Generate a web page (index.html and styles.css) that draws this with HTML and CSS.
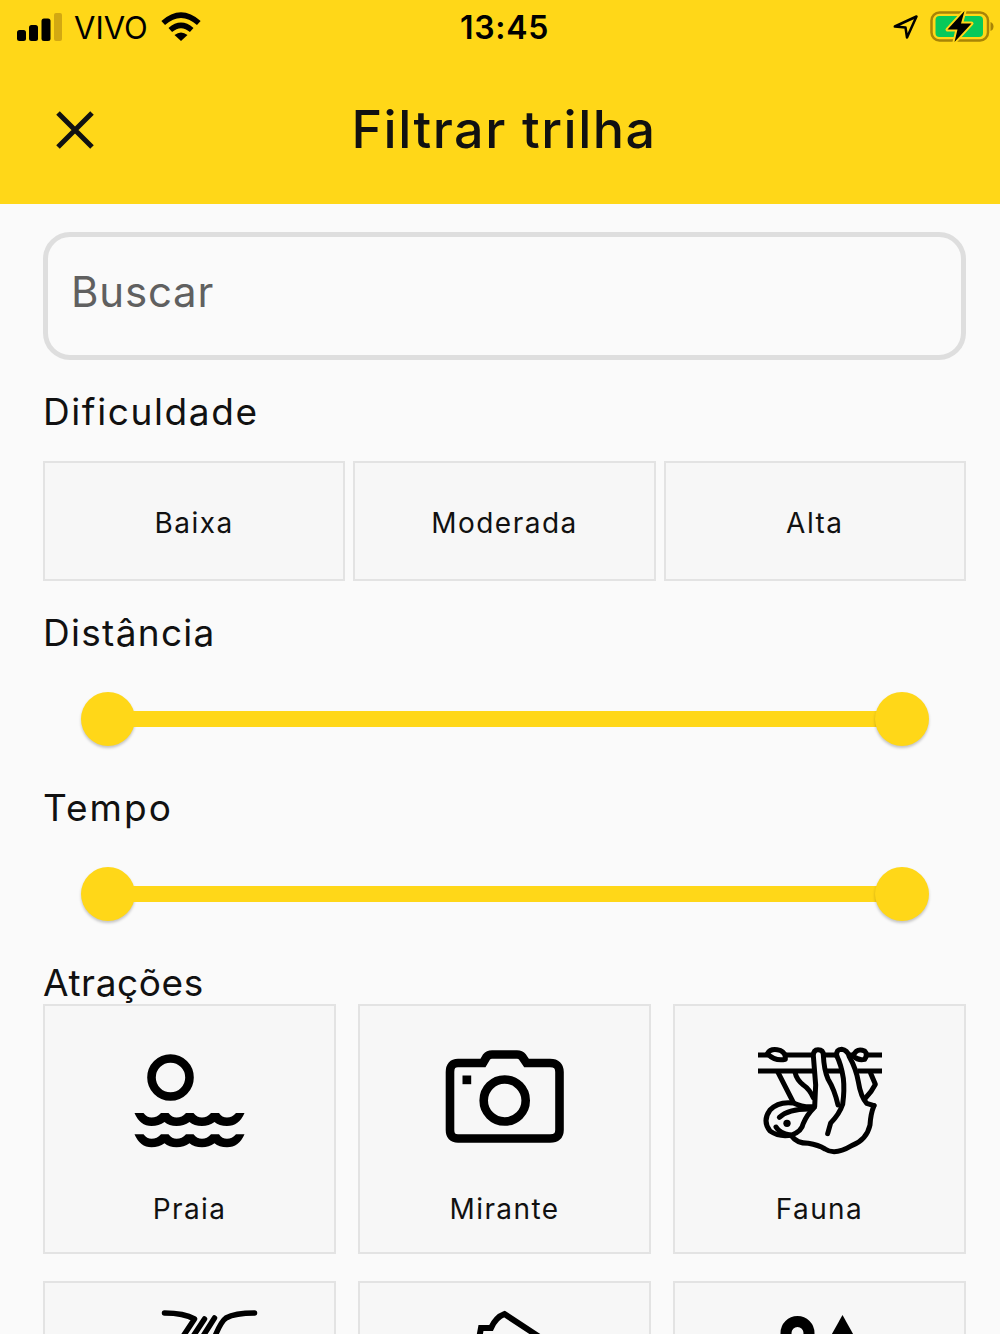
FILE: index.html
```
<!DOCTYPE html>
<html lang="pt-BR">
<head>
  <meta charset="UTF-8">
  <meta name="viewport" content="width=device-width, initial-scale=1.0">
  <title>Filtrar trilha</title>
  <link rel="stylesheet" href="styles.css">
</head>
<body>
  <div class="app">
    <header class="topo">
      <div class="status">
        <div class="status-esq">
          <svg class="sinal" width="46" height="30" viewBox="0 0 46 30">
            <rect x="0" y="18" width="9" height="11" rx="2.5"/>
            <rect x="12" y="13" width="9" height="16" rx="2.5"/>
            <rect x="24.5" y="6.5" width="9" height="22.5" rx="2.5"/>
            <rect x="37" y="1" width="8" height="28" rx="2" fill="#d2a812"/>
          </svg>
          <span class="operadora">VIVO</span>
          <svg class="wifi" width="40" height="30" viewBox="0 0 40 30">
            <path d="M20 29 L13.5 23 Q20 18 26.5 23 Z"/>
            <path d="M9.300 18 Q20 8.800 30.700 18" fill="none" stroke="#000" stroke-width="5.5"/>
            <path d="M2.200 11 Q20 -4.800 37.800 11" fill="none" stroke="#000" stroke-width="5.5"/>
          </svg>
        </div>
        <span class="hora">13:45</span>
        <div class="status-dir">
          <svg class="local" width="26" height="26" viewBox="0 0 26 26">
            <path d="M1.800 12.5 L23.5 2.5 L14 23.5 L12.5 13.5 Z" fill="none" stroke="#000" stroke-width="2.5" stroke-linejoin="round"/>
          </svg>
          <svg class="bateria" width="64" height="34" viewBox="0 0 64 34">
            <rect x="1.500" y="2.500" width="56.500" height="28" rx="8" fill="none" stroke="#a88406" stroke-width="2.500"/>
            <rect x="5.500" y="6" width="47.500" height="21" rx="4" fill="#07c95a"/>
            <path d="M60.500 12 Q63.500 13 63.500 16.500 Q63.500 20 60.500 21 Z" fill="#a88406"/>
            <path d="M34.500 1 L17.500 19.500 L27.500 19.500 L24.500 32 L41.500 13.500 L31 13.500 Z" stroke="#ffd718" stroke-width="4" paint-order="stroke" stroke-linejoin="round"/>
          </svg>
        </div>
      </div>
      <div class="titulo">
        <button class="fechar" aria-label="Fechar">
          <svg width="40" height="40" viewBox="0 0 40 40">
            <path d="M3 3 L37 37 M37 3 L3 37" fill="none" stroke="#111" stroke-width="5"/>
          </svg>
        </button>
        <h1>Filtrar trilha</h1>
      </div>
    </header>

    <main class="filtros">
      <input class="busca" type="text" placeholder="Buscar">

      <h2 class="t-dificuldade">Dificuldade</h2>
      <div class="niveis">
        <button>Baixa</button>
        <button>Moderada</button>
        <button>Alta</button>
      </div>

      <h2 class="t-distancia">Distância</h2>
      <div class="faixa">
        <span class="bola"></span>
        <span class="trilho"></span>
        <span class="bola"></span>
      </div>

      <h2 class="t-tempo">Tempo</h2>
      <div class="faixa">
        <span class="bola"></span>
        <span class="trilho"></span>
        <span class="bola"></span>
      </div>

      <h2 class="t-atracoes">Atrações</h2>
      <div class="atracoes">
        <button class="atracao">
          <svg viewBox="120 1035 140 130">
            <circle cx="170.5" cy="1077.5" r="19" fill="none" stroke="#000" stroke-width="8.6"/>
            <path id="onda" d="M134.500 1113 H143.500 Q147 1117.500 151.500 1117.500 Q157 1117.500 161 1113 H168.500 Q172 1117.500 176.500 1117.500 Q182 1117.500 186 1113 H193.500 Q197 1117.500 202 1117.500 Q207 1117.500 211 1113 H219 Q222 1117.500 227 1117.500 Q232 1117.500 236 1113 H244.500 Q239 1126 227 1126 Q219 1126 214.500 1122 Q209 1126 202 1126 Q194 1126 189.500 1122 Q184 1126 176.500 1126 Q169 1126 164.500 1122 Q159 1126 151.500 1126 Q140 1126 134.500 1113 Z"/>
            <use href="#onda" y="21.3"/>
          </svg>
          <span>Praia</span>
        </button>
        <button class="atracao">
          <svg viewBox="435 1035 140 130">
            <path d="M458 1063 H483 L486.500 1057 Q488.500 1054.500 492 1054.500 H517 Q520.500 1054.500 522.500 1057 L526.500 1063 H550 Q559.500 1063 559.500 1072 V1130 Q559.500 1138.500 550 1138.500 H458 Q450 1138.500 450 1130 V1072 Q450 1063 458 1063 Z" fill="none" stroke="#000" stroke-width="8.6"/>
            <circle cx="504.700" cy="1100.500" r="21" fill="none" stroke="#000" stroke-width="8.6"/>
            <rect x="462.500" y="1075.500" width="8.700" height="8.700"/>
          </svg>
          <span>Mirante</span>
        </button>
        <button class="atracao">
          <svg viewBox="0 0 420 390">
            <g fill="none" stroke="#000" stroke-width="15" stroke-linecap="round" stroke-linejoin="round">
              <!-- galhos e folhas -->
              <path d="M24 60 H54 M106 60 H190 M222 60 H262 M296 60 H312 M350 60 H396 M24 108 H192 M230 108 H274 M322 108 H396" stroke-linecap="butt"/>
              <path d="M52 56 Q62 38 90 46 Q108 54 106 73 Q76 80 52 56 Z M310 62 Q320 38 344 48 Q354 58 344 73 Q325 78 310 62 Z"/>
              <!-- patas -->
              <path d="M84 112 L130 202 M135 112 Q140 135 160 150 Q178 162 190 188"/>
              <path d="M194 215 L197 150 L190 62 Q190 44 204 44 Q220 44 220 60 Q222 105 234 132 Q254 165 264 210"/>
              <path d="M260 62 Q258 43 275 43 Q292 45 298 65 Q318 100 325 140 Q332 185 350 205 L372 212"/>
              <path d="M260 62 Q274 90 280 130 Q284 165 278 208 Q268 238 242 264 L233 296"/>
              <path d="M362 115 L376 148 Q365 170 346 190"/>
              <!-- corpo e cabeça -->
              <path d="M372 212 Q362 235 360 270 Q350 315 305 332 Q255 362 225 342 Q205 330 175 325 Q140 325 125 303"/>
              <path d="M192 215 Q160 218 130 204 Q85 198 60 225 Q36 258 60 288 Q90 308 125 300 Q155 290 160 265 Q170 240 192 218"/>
              <path d="M88 247 Q115 222 175 222 M78 276 Q88 294 120 300"/>
            </g>
            <circle cx="111" cy="265" r="11"/>
          </svg>
          <span>Fauna</span>
        </button>
        <div class="atracao">
          <svg viewBox="120 1312 140 130">
            <path d="M164.500 1313 Q184 1313 194.500 1319 L178 1344 M204.500 1319 L188 1344 M214.500 1318 L198 1344 M254.500 1313 Q235 1313 226 1318 Q220 1322 212 1344" fill="none" stroke="#000" stroke-width="5.5" stroke-linecap="round" stroke-linejoin="round"/>
          </svg>
        </div>
        <div class="atracao">
          <svg viewBox="435 1312 140 130">
            <path d="M478 1344 L481 1328 H491 Q496 1317 504.500 1314 L550 1344" fill="none" stroke="#000" stroke-width="6"/>
          </svg>
        </div>
        <div class="atracao">
          <svg viewBox="750 1312 140 130">
            <path d="M842.500 1315 L862 1350 H823 Z"/>
            <circle cx="797.500" cy="1333" r="11.500" fill="none" stroke="#000" stroke-width="11"/>
          </svg>
        </div>
      </div>
    </main>
  </div>
</body>
</html>
```
FILE: styles.css
```
* {
  box-sizing: border-box;
}
body {
  margin: 0;
  font-family: "Inter", "Open Sans", sans-serif;
  background-color: #fafafa;
  color: #111;
}
.app {
  height: 1334px;
  overflow: hidden;
}
button {
  font-family: inherit;
  color: inherit;
  padding: 0;
}
svg {
  display: block;
  flex: none;
  overflow: visible;
}
.topo {
  height: 204px;
  background-color: #ffd718;
}
.status {
  display: grid;
  grid-template-columns: 1fr auto 1fr;
  align-items: center;
  height: 54px;
  padding: 0 6px 0 17px;
  color: #000;
}
.status-esq, .status-dir {
  display: flex;
  align-items: center;
}
.status-dir {
  justify-content: flex-end;
  gap: 11px;
}
.operadora {
  font-size: 31px;
  margin-left: 11px;
  width: 76px;
}
.wifi {
  margin-left: 11px;
}
.hora {
  font-size: 32px;
  font-weight: 600;
  letter-spacing: 0.7px;
  margin-right: 2px;
}
.titulo {
  display: grid;
  grid-template-columns: 150px 1fr 142px;
  align-items: center;
  height: 151px;
}
.fechar {
  border: none;
  background: none;
  justify-self: center;
}
h1 {
  margin: 0;
  font-size: 52px;
  font-weight: 450;
  line-height: 60px;
  letter-spacing: 1.5px;
  text-align: center;
}
.filtros {
  padding: 28px 34px 0 43px;
}
.busca {
  display: block;
  width: 100%;
  height: 128px;
  padding: 0 23px 9px;
  border: 5px solid #dedede;
  border-radius: 27px;
  background: none;
  font-family: inherit;
  font-size: 42px;
  letter-spacing: 0.8px;
}
.busca::placeholder {
  color: #606060;
  opacity: 1;
}
h2 {
  font-size: 37px;
  font-weight: 400;
  line-height: 44px;
  letter-spacing: 1.5px;
}
.t-dificuldade {
  margin: 30px 0 27px;
  letter-spacing: 1.6px;
}
.t-distancia {
  margin: 30px 0 37px;
  letter-spacing: 1.3px;
}
.t-tempo {
  margin: 40px 0 37px;
  letter-spacing: 2px;
}
.t-atracoes {
  margin: 40px 0 -1px;
  letter-spacing: 0.6px;
}
.niveis {
  display: grid;
  grid-template-columns: repeat(3, 1fr);
  gap: 8px;
}
.niveis button {
  height: 120px;
  border: 2px solid #e3e3e3;
  background-color: #f7f7f7;
  font-size: 28px;
  letter-spacing: 1.5px;
  padding-top: 3px;
}
.faixa {
  display: flex;
  align-items: center;
  height: 54px;
  margin: 0 37px 0 38px;
}
.bola {
  width: 54px;
  height: 54px;
  border-radius: 50%;
  background-color: #ffd718;
  box-shadow: 0 2px 3px rgba(0, 0, 0, 0.22);
}
.trilho {
  flex: 1;
  height: 16px;
  margin: 0 -4px;
  background-color: #ffd718;
}
.atracoes {
  display: grid;
  grid-template-columns: repeat(3, 1fr);
  gap: 27px 22px;
}
.atracao {
  display: flex;
  flex-direction: column;
  align-items: center;
  height: 250px;
  padding-top: 29px;
  border: 2px solid #e3e3e3;
  background-color: #f7f7f7;
  font-size: 28px;
  letter-spacing: 1.4px;
}
.atracao svg {
  width: 140px;
  height: 130px;
}
.atracao span {
  margin-top: 26px;
  line-height: 36px;
}
```
